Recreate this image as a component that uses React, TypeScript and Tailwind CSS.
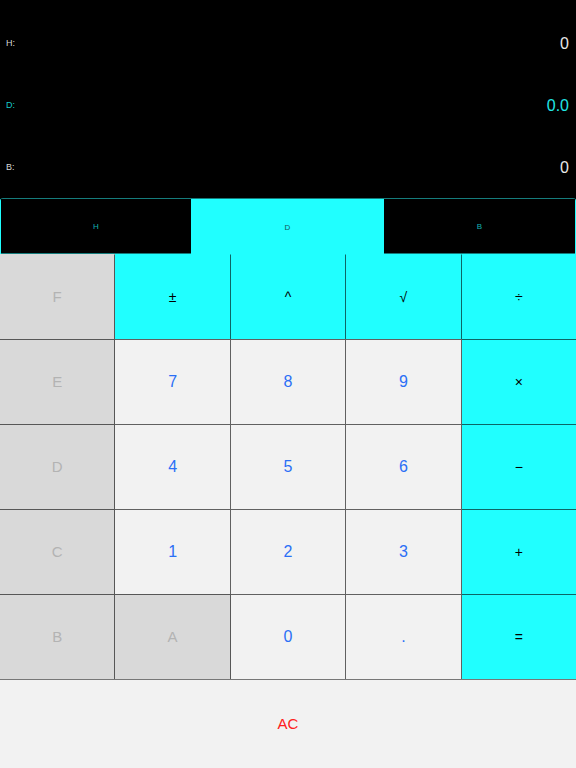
import React from "react";

type Cell = { label: string; kind: "hex" | "op" | "num" };

const rows: Cell[][] = [
  [
    { label: "F", kind: "hex" },
    { label: "±", kind: "op" },
    { label: "^", kind: "op" },
    { label: "√", kind: "op" },
    { label: "÷", kind: "op" },
  ],
  [
    { label: "E", kind: "hex" },
    { label: "7", kind: "num" },
    { label: "8", kind: "num" },
    { label: "9", kind: "num" },
    { label: "×", kind: "op" },
  ],
  [
    { label: "D", kind: "hex" },
    { label: "4", kind: "num" },
    { label: "5", kind: "num" },
    { label: "6", kind: "num" },
    { label: "−", kind: "op" },
  ],
  [
    { label: "C", kind: "hex" },
    { label: "1", kind: "num" },
    { label: "2", kind: "num" },
    { label: "3", kind: "num" },
    { label: "+", kind: "op" },
  ],
  [
    { label: "B", kind: "hex" },
    { label: "A", kind: "hex" },
    { label: "0", kind: "num" },
    { label: ".", kind: "num" },
    { label: "=", kind: "op" },
  ],
];

function cellClass(kind: Cell["kind"]) {
  if (kind === "hex") return "bg-[#d9d9d9] text-[#b3b3b3] text-[15px]";
  if (kind === "op") return "bg-[#20ffff] text-black text-[14px]";
  return "bg-[#f2f2f2] text-[#2a6ff6] text-[16px]";
}

export default function App() {
  return (
    <div
      className="w-[576px] h-[768px] flex flex-col bg-black overflow-hidden"
      style={{ fontFamily: '"Liberation Sans", Arial, sans-serif' }}
    >
      {/* display */}
      <div className="h-[198px] flex-none pt-[13px] flex flex-col">
        <div className="h-[62px] flex-none flex items-center justify-between pl-[6px] pr-[7px]">
          <span className="text-[9px] text-[#d8d8d8]">H:</span>
          <span className="text-[16px] text-[#e8e8e8]">0</span>
        </div>
        <div className="h-[62px] flex-none flex items-center justify-between pl-[6px] pr-[7px]">
          <span className="text-[9px] text-[#16c8c8]">D:</span>
          <span className="text-[16px] text-[#20e6e6]">0.0</span>
        </div>
        <div className="h-[61px] flex-none flex items-center justify-between pl-[6px] pr-[7px]">
          <span className="text-[9px] text-[#d8d8d8]">B:</span>
          <span className="text-[16px] text-[#e8e8e8]">0</span>
        </div>
      </div>

      {/* segmented control */}
      <div className="h-[56px] flex-none flex border-t border-t-[#157c7c] border-l border-l-[#20ffff] border-r border-r-[#20ffff] rounded-t-[3px]">
        <div className="w-[190px] pt-[2px] flex items-center justify-center bg-black border-b border-b-[#157c7c]">
          <span className="text-[8px] text-[#12b0b0]">H</span>
        </div>
        <div className="w-[193px] pt-[2px] flex items-center justify-center bg-[#20ffff]">
          <span className="text-[8px] text-[#155858]">D</span>
        </div>
        <div className="flex-1 pt-[2px] flex items-center justify-center bg-black border-b border-b-[#157c7c]">
          <span className="text-[8px] text-[#12b0b0]">B</span>
        </div>
      </div>

      {/* keypad */}
      <div className="flex flex-col flex-none">
        {rows.map((row, ri) => (
          <div key={ri} className="h-[85px] flex">
            {row.map((c, ci) => (
              <div
                key={ci}
                className={`flex-1 flex items-center justify-center border-t ${
                  ri === 0 ? "border-t-transparent" : "border-t-black/60"
                } ${cellClass(c.kind)} ${ci < 4 ? "border-r border-r-black/60" : ""}`}
              >
                {c.label}
              </div>
            ))}
          </div>
        ))}
      </div>

      {/* AC */}
      <div className="flex-1 bg-[#f2f2f2] border-t border-t-[#777777] flex items-center justify-center">
        <span className="text-[15px] text-[#ff2020]">AC</span>
      </div>
    </div>
  );
}
